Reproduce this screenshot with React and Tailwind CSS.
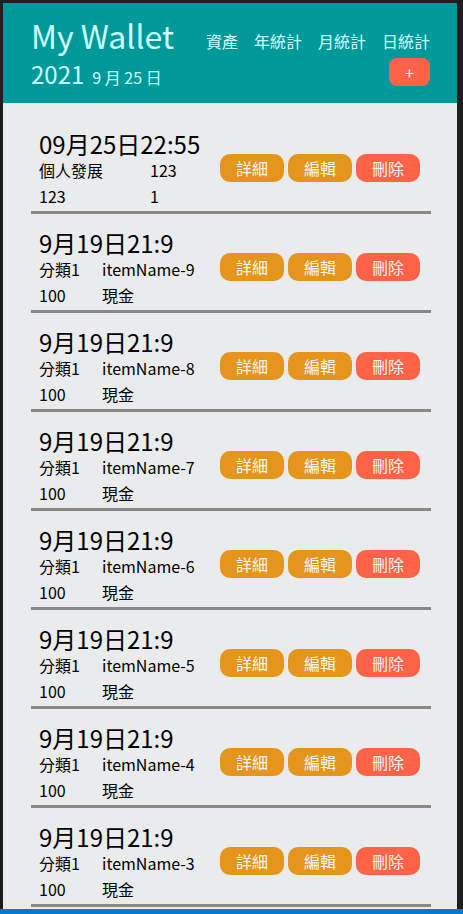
import React from 'react';

const records = [
  { title: '09月25日22:55', rows: [['個人發展', '123'], ['123', '1']], col: 'grid-cols-[111px_auto]' },
  ...[9, 8, 7, 6, 5, 4, 3, 2].map((n) => ({
    title: '9月19日21:9',
    rows: [['分類1', `itemName-${n}`], ['100', '現金']],
    col: 'grid-cols-[63px_auto]',
  })),
];

function Record({ item }) {
  return (
    <div className="pt-3">
      <div className="flex items-center justify-between pl-2 pr-[11px]">
        <div>
          <div className="mt-1 text-[24px] leading-[26px] text-black">{item.title}</div>
          <div className={`grid ${item.col} text-[16px] leading-[26px] text-black`}>
            {item.rows.flat().map((cell, i) => (
              <span key={i}>{cell}</span>
            ))}
          </div>
        </div>
        <div className="flex gap-1 text-[16px]">
          <button className="w-16 h-7 rounded-[10px] bg-[#e5951b] text-[#f4f4f4]">詳細</button>
          <button className="w-16 h-7 rounded-[10px] bg-[#e5951b] text-[#f4f4f4]">編輯</button>
          <button className="w-16 h-7 rounded-[10px] bg-[#ff6347] text-[#f4f4f4]">刪除</button>
        </div>
      </div>
      <div className="mt-[2px] h-[3px] bg-[#888888]"></div>
    </div>
  );
}

export default function App() {
  return (
    <div className="h-[914px] bg-[#1e1e1e] overflow-hidden font-['Noto_Sans_CJK_TC',sans-serif]">
      <div className="ml-[3px] mt-[3px] w-[454px] h-[906px] bg-[#eaebed] overflow-hidden">
        {/* Header */}
        <div className="h-[100px] bg-[#009999] flex justify-between pl-[28px] pr-[27px] pt-[12px] text-[#ccffff]">
          <div>
            <h1 className="text-[32px] leading-[40px]">My Wallet</h1>
            <div className="leading-[38px]">
              <span className="text-[24px]">2021</span>
              <span className="text-[16px] ml-2">9 月 25 日</span>
            </div>
          </div>
          <div className="flex flex-col items-end">
            <nav className="flex gap-4 text-[16px] leading-[24px] mt-[14px]">
              <span>資產</span>
              <span>年統計</span>
              <span>月統計</span>
              <span>日統計</span>
            </nav>
            <button className="mt-[5px] w-[41px] h-7 rounded-lg bg-[#ff6347] text-white text-[16px]">+</button>
          </div>
        </div>

        {/* Records */}
        <div className="pt-3 pl-[28px] pr-[26px]">
          {records.map((item, i) => (
            <Record key={i} item={item} />
          ))}
        </div>
      </div>
      <div className="h-[5px] bg-[#007acc]"></div>
    </div>
  );
}
